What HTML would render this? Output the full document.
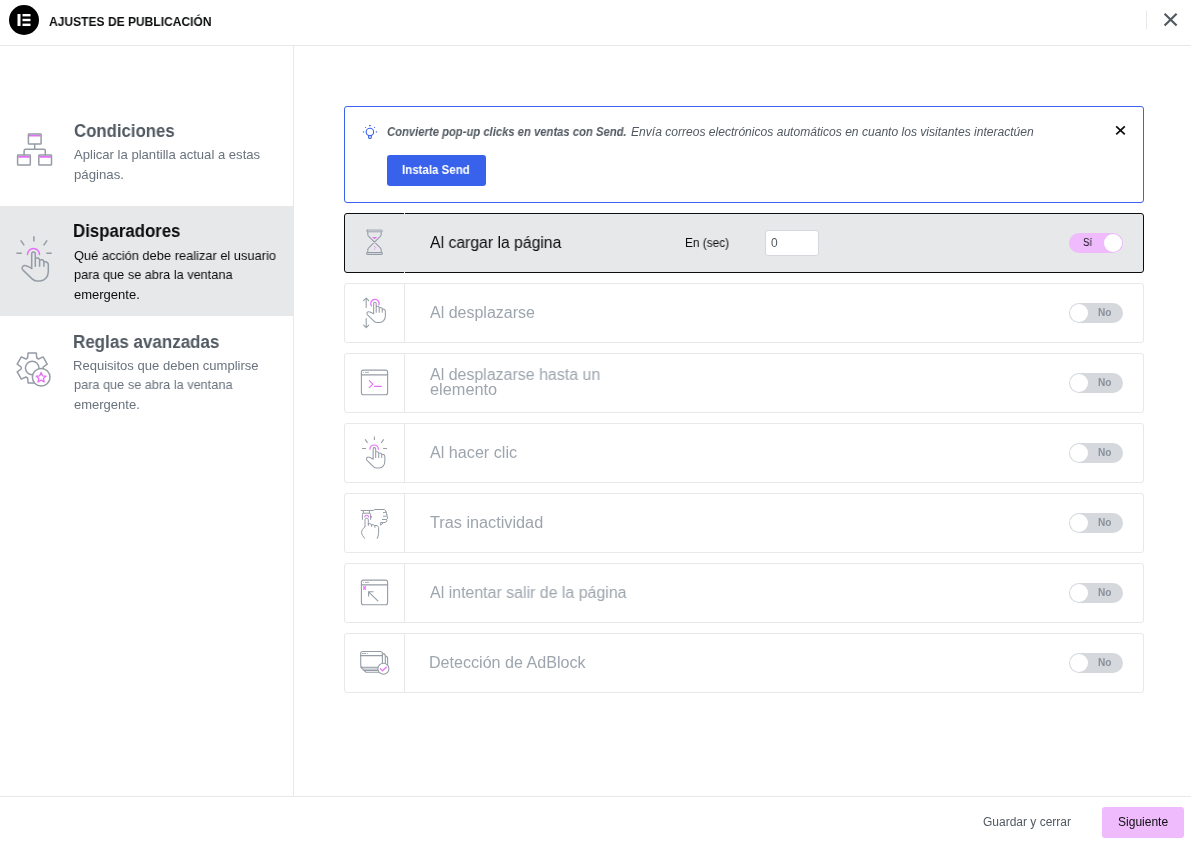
<!DOCTYPE html>
<html lang="es">
<head>
<meta charset="utf-8">
<title>Ajustes de publicación</title>
<style>
*{box-sizing:border-box;margin:0;padding:0}
html,body{width:1191px;height:844px;overflow:hidden;background:#fff}
body{position:relative;font-family:"Liberation Sans",sans-serif;color:#515962}
.abs{position:absolute;white-space:nowrap}
.t{transform-origin:0 0;will-change:transform}
.b{position:absolute}
.row{position:absolute;left:344px;width:800px;height:60px;border:1px solid #e6e8ea;border-radius:3px}
.row i{position:absolute;left:59px;top:0;width:1px;height:58px;background:#e6e8ea}
.row.on{background:#e6e8ea;border-color:#0c0d0e}
.row.on i{top:-1px;height:60px;background:#e6e8ea}
.tog{position:absolute;left:1069px;width:54px;height:20px;border-radius:10px;background:#d5d8dc}
.tog i{position:absolute;left:1px;top:1px;width:18px;height:18px;border-radius:9px;background:#fff}
.tog.on{background:#efbbfc}
.tog.on i{left:35px}
</style>
</head>
<body>
<div class="b" style="left:0;top:45px;width:1191px;height:1px;background:#e6e8ea"></div>
<svg class="abs" style="left:9px;top:5px;width:30px;height:30px" viewBox="0 0 30 30"><circle cx="15" cy="15" r="15" fill="#000"/><rect x="8.5" y="9" width="3" height="12" fill="#fff"/><rect x="13.5" y="9" width="8" height="2.4" fill="#fff"/><rect x="13.5" y="13.8" width="8" height="2.4" fill="#fff"/><rect x="13.5" y="18.6" width="8" height="2.4" fill="#fff"/></svg>
<div class="b" style="left:1146px;top:11px;width:1px;height:18px;background:#e6e8ea"></div>
<svg class="abs" style="left:1160px;top:9px;width:22px;height:22px" viewBox="1160 9 22 22"><path d="M1164.6 13.7L1176.6 25.5M1176.6 13.7L1164.6 25.5" stroke="#515962" stroke-width="2.2" fill="none"/></svg>
<div class="b" style="left:293px;top:46px;width:1px;height:750px;background:#e6e8ea"></div>
<div class="b" style="left:0;top:206px;width:293px;height:110px;background:#e6e8ea"></div>
<div class="b" style="left:344px;top:106px;width:800px;height:97px;border:1px solid #3b63ec;border-radius:3px"></div>
<div class="b" style="left:387px;top:155px;width:99px;height:31px;border-radius:3px;background:#3862eb"></div>
<svg class="abs" style="left:358px;top:120px;width:24px;height:24px" viewBox="358 120 24 24" fill="none" stroke="#3b63ec" stroke-width="1.1" stroke-linecap="round" stroke-linejoin="round"><circle cx="369.9" cy="131.9" r="3.7"/><path d="M368.6 135.4V137.4Q368.6 138.4 369.9 138.4Q371.3 138.4 371.3 137.4V135.4"/><path d="M369.5 125.6h.8M365.5 127.5h.01M374.5 127.5h.01M363.4 131.9h.3M376.3 131.9h.3" stroke-width="1.2"/></svg>
<svg class="abs" style="left:1110px;top:120px;width:22px;height:22px" viewBox="1110 120 22 22"><path d="M1116.2 126.4L1124.8 134.4M1124.8 126.4L1116.2 134.4" stroke="#0c0d0e" stroke-width="1.7" fill="none"/></svg>
<div class="row on" style="top:213px"><i></i></div>
<div class="row" style="top:283px"><i></i></div>
<div class="row" style="top:353px"><i></i></div>
<div class="row" style="top:423px"><i></i></div>
<div class="row" style="top:493px"><i></i></div>
<div class="row" style="top:563px"><i></i></div>
<div class="row" style="top:633px"><i></i></div>
<div class="b" style="left:765px;top:230px;width:54px;height:26px;border:1px solid #d5d8dc;border-radius:3px;background:#fff"></div>
<div class="tog on" style="top:233px"><i></i></div>
<div class="tog" style="top:303px"><i></i></div>
<div class="tog" style="top:373px"><i></i></div>
<div class="tog" style="top:443px"><i></i></div>
<div class="tog" style="top:513px"><i></i></div>
<div class="tog" style="top:583px"><i></i></div>
<div class="tog" style="top:653px"><i></i></div>
<svg class="abs" style="left:8px;top:122px;width:56px;height:56px" viewBox="8 122 56 56" fill="none" stroke="#959ca6" stroke-width="1.5" stroke-linejoin="round" stroke-linecap="round">
 <path d="M29 135.7H40.5M18.2 156.8H29.7M39.4 156.8H50.9" stroke="#e56ff8" stroke-width="1.7" stroke-linecap="butt"/>
 <rect x="28.4" y="134" width="12.7" height="10" rx=".6"/>
 <rect x="17.6" y="155.1" width="12.7" height="10" rx=".6"/>
 <rect x="38.8" y="155.1" width="12.7" height="10" rx=".6"/>
 <path d="M34.7 144.2V149.2M24.1 154.9V150.7Q24.1 149.2 25.6 149.2H43.8Q45.3 149.2 45.3 150.7V154.9"/></svg>
<svg class="abs" style="left:8px;top:228px;width:56px;height:56px" viewBox="8 228 56 56" fill="none" stroke="#959ca6" stroke-width="1.5" stroke-linejoin="round" stroke-linecap="round">
 <path d="M33.9 236.2V241.4M20.7 240.4L24.2 245.4M47.1 240.4L43.6 245.4M16.4 253.2H21.8M46.3 253.2H51.7" stroke-linecap="butt"/>
 <path d="M27.5 254.4A6 6 0 0 1 39.5 254.4" stroke="#e56ff8" stroke-width="1.5"/>
 <path d="M31.7 268.4V253.9a1.8 1.8 0 0 1 3.6 0V266.2M35.3 259C35.5 257.4 39.6 257.3 39.6 260.2V266.2M39.6 260.8C39.8 259.2 43.9 259.1 43.9 262V266.2M43.9 262.8C44.2 261.3 48.3 261.4 48.3 264.6V271.8C48.3 277 44.6 280.9 40 280.9H36.6C34.6 280.9 33.6 280.3 32.1 278.9L23 270.1C21.6 268.6 22 266.6 23.8 265.7C25.5 264.9 27 265.7 31.8 268.5"/></svg>
<svg class="abs" style="left:8px;top:342px;width:56px;height:56px" viewBox="8 342 56 56" fill="none" stroke="#959ca6" stroke-width="1.5" stroke-linejoin="round" stroke-linecap="round">
 <path d="M36.8 358.0L36.3 353.1L28.1 353.1L27.6 358.0L25.9 359.0L21.3 356.9L17.2 364.1L21.2 367.0L21.2 369.0L17.2 371.9L21.3 379.1L25.9 377.0L27.6 378.0L28.1 382.9L36.3 382.9L36.8 378.0L38.5 377.0L43.1 379.1L47.2 371.9L43.2 369.0L43.2 367.0L47.2 364.1L43.1 356.9L38.5 359.0Z"/>
 <circle cx="32.2" cy="368" r="6.8"/>
 <circle cx="41.2" cy="377.2" r="8.8" fill="#fff"/>
 <path d="M41.1 372.4L39.7 375.8L36.1 376.1L38.8 378.4L38.0 382.0L41.1 380.1L44.2 382.0L43.4 378.4L46.1 376.1L42.5 375.8Z" stroke="#e56ff8" stroke-width="1.3"/></svg>
<svg class="abs" style="left:354px;top:222px;width:40px;height:40px" viewBox="354 222 40 40" fill="none" stroke="#959ca6" stroke-width="1.05" stroke-linejoin="round" stroke-linecap="round">
 <rect x="366.6" y="230.1" width="15.8" height="1.7" rx=".85" stroke-width=".9"/>
 <rect x="366.6" y="252.55" width="15.8" height="1.8" rx=".9"/>
 <path d="M367.8 232V234.4Q367.8 235.5 368.7 236.4L380.3 247.8Q381.2 248.7 381.2 249.8V252.4M381.2 232V234.4Q381.2 235.5 380.3 236.4L368.7 247.8Q367.8 248.7 367.8 249.8V252.4"/>
 <path d="M372.1 237H377.1L374.6 239.2Z" fill="#e56ff8" stroke="none"/>
 <path d="M374.4 246.4h.01M375.7 247.7h.01M374.5 249.3h.01" stroke="#e56ff8" stroke-width="1"/></svg>
<svg class="abs" style="left:354px;top:292px;width:40px;height:40px" viewBox="354 292 40 40" fill="none" stroke="#959ca6" stroke-width="1.05" stroke-linejoin="round" stroke-linecap="round">
 <path d="M366.2 307.5V298M363.6 300.7L366.2 298L368.8 300.7M366.2 318.4V327.7M363.6 325.1L366.2 327.7L368.8 325.1"/>
 <path d="M371.4 305.9A4.2 4.2 0 1 1 378.9 305" stroke="#e56ff8" stroke-width="1.2"/>
 <g transform="translate(351.3 124.5) scale(.705)" stroke-width="1.5"><path d="M31.7 268.4V253.9a1.8 1.8 0 0 1 3.6 0V266.2M35.3 259C35.5 257.4 39.6 257.3 39.6 260.2V266.2M39.6 260.8C39.8 259.2 43.9 259.1 43.9 262V266.2M43.9 262.8C44.2 261.3 48.3 261.4 48.3 264.6V271.8C48.3 277 44.6 280.9 40 280.9H36.6C34.6 280.9 33.6 280.3 32.1 278.9L23 270.1C21.6 268.6 22 266.6 23.8 265.7C25.5 264.9 27 265.7 31.8 268.5"/></g></svg>
<svg class="abs" style="left:354px;top:362px;width:40px;height:40px" viewBox="354 362 40 40" fill="none" stroke="#959ca6" stroke-width="1.1" stroke-linejoin="round" stroke-linecap="round">
 <rect x="361.4" y="370.1" width="26.2" height="24.6" rx="2"/>
 <path d="M361.4 374.8H387.6" stroke-width="1.3"/>
 <path d="M363.5 372.4h.01M365.4 372.4H368.6" stroke-width=".8"/>
 <path d="M369.3 380.6L372.9 384.1L369.3 387.7M374.5 386.4H381.4" stroke="#e56ff8" stroke-width="1.1"/></svg>
<svg class="abs" style="left:354px;top:432px;width:40px;height:40px" viewBox="354 432 40 40" fill="none" stroke="#959ca6" stroke-width="1.05" stroke-linejoin="round" stroke-linecap="round">
 <g transform="translate(350.5 269.9) scale(.705)" stroke-width="1.5"><path d="M33.9 236.2V241.4M20.7 240.4L24.2 245.4M47.1 240.4L43.6 245.4M16.4 253.2H21.8M46.3 253.2H51.7" stroke-linecap="butt"/><path d="M27.5 254.4A6 6 0 0 1 39.5 254.4" stroke="#e56ff8" stroke-width="1.7"/></g><g transform="translate(350.8 269.9) scale(.705)" stroke-width="1.5"><path d="M31.7 268.4V253.9a1.8 1.8 0 0 1 3.6 0V266.2M35.3 259C35.5 257.4 39.6 257.3 39.6 260.2V266.2M39.6 260.8C39.8 259.2 43.9 259.1 43.9 262V266.2M43.9 262.8C44.2 261.3 48.3 261.4 48.3 264.6V271.8C48.3 277 44.6 280.9 40 280.9H36.6C34.6 280.9 33.6 280.3 32.1 278.9L23 270.1C21.6 268.6 22 266.6 23.8 265.7C25.5 264.9 27 265.7 31.8 268.5"/></g></svg>
<svg class="abs" style="left:354px;top:502px;width:40px;height:40px" viewBox="354 502 40 40" fill="none" stroke="#959ca6" stroke-width="1.0" stroke-linejoin="round" stroke-linecap="round">
 <path d="M361.2 510.5H373.2L374.6 509.5H384.4Q385.6 509.6 385.8 511.2"/>
 <path d="M383.4 512.6H385.6Q386.9 512.8 386.8 514.4M383.4 516.2H386.6Q387.9 516.6 387.6 518M382.4 519.5H386.4Q387.4 520 386.8 521Q386.2 522.6 384 522.6H380.6V525.2L383 523"/>
 <path d="M385.8 511.2Q386.6 511.6 386.4 512.8M386.8 514.4Q387.6 515 387.2 516.3M387.6 518Q387.6 519 386.6 519.5"/>
 <path d="M363.3 510.6V513.2M369.4 510.6V513.2M362.4 519.4V514.2Q362.4 513.2 363.4 513.2H369.6Q370.6 513.2 370.6 514.2V519.4M370.8 516.2L371.9 516.9L370.8 517.6"/>
 <path d="M364.9 517A1.8 1.8 0 0 1 368.5 517" stroke="#e56ff8" stroke-width="1.1"/>
 <path d="M365 526.6V519.8A1.65 1.65 0 0 1 368.3 519.8V525.5M365 526.6Q361.4 529.6 361.4 532.4Q361.6 535 364.6 538.4"/>
 <path d="M368.3 523.6Q371.4 523.2 371.5 525V526.4M371.5 524.6Q374.8 524.4 374.9 526V527.4M374.9 525.4Q378.4 525 378.6 527.4V533.2Q378.4 536 377.3 538.4"/></svg>
<svg class="abs" style="left:354px;top:572px;width:40px;height:40px" viewBox="354 572 40 40" fill="none" stroke="#959ca6" stroke-width="1.1" stroke-linejoin="round" stroke-linecap="round">
 <rect x="361.4" y="580.1" width="26.2" height="24.6" rx="2"/>
 <path d="M361.4 584.8H387.6" stroke-width="1.3"/>
 <path d="M363.5 582.4h.01M365.4 582.4H368.6" stroke-width=".8"/>
 <path d="M363.4 586.3L365.8 589.7M365.8 586.3L363.4 589.7" stroke="#e56ff8" stroke-width="1.3" stroke-linecap="butt"/>
 <path d="M378.3 601.3L368.6 591.8M368.6 596.6V591.8H373.6" stroke-linecap="butt" stroke-linejoin="miter"/></svg>
<svg class="abs" style="left:354px;top:642px;width:40px;height:40px" viewBox="354 642 40 40" fill="none" stroke="#959ca6" stroke-width="1.1" stroke-linejoin="round" stroke-linecap="round">
 <path d="M360.8 667.3L364 670.4H384V667.3Z" fill="#d5d8dc" stroke="none"/>
 <path d="M383 653.6Q385.3 653.8 385.3 656V668M385.4 656Q387.6 656.2 387.6 658.4V668M360.9 667.4L366 672.3H384M363.8 670.4H384"/>
 <rect x="360.7" y="651.5" width="21.7" height="15.8" rx="2" fill="#fff"/>
 <path d="M360.7 655.7H382.4" stroke-width="1.2"/>
 <path d="M362.4 653.5H365.8M367.7 653.5h.01" stroke-width=".8"/>
 <circle cx="383.4" cy="668.8" r="5.5" fill="#fff"/>
 <path d="M380.4 668.6L382.4 670.8L386.4 667.2" stroke="#e56ff8" stroke-width="1.2"/></svg>
<div class="b" style="left:0;top:796px;width:1191px;height:1px;background:#e6e8ea"></div>
<div class="b" style="left:1102px;top:807px;width:82px;height:31px;border-radius:3px;background:#efbbfc"></div>
<div class="abs t" id="h1" style="left:49px;top:14px;font-size:12.5px;line-height:17px;color:#0c0d0e;transform:scaleX(0.9630);font-weight:700">AJUSTES DE PUBLICACIÓN</div>
<div class="abs t" id="s1" style="left:74px;top:120px;font-size:17.5px;line-height:23px;color:#515962;transform:scaleX(0.9589);font-weight:700">Condiciones</div>
<div class="abs t" id="s1a" style="left:74px;top:146px;font-size:13px;line-height:17px;color:#69727d;transform:scaleX(1.0060)">Aplicar la plantilla actual a estas</div>
<div class="abs t" id="s1b" style="left:74px;top:166px;font-size:13px;line-height:17px;color:#69727d;transform:scaleX(1.0169)">páginas.</div>
<div class="abs t" id="s2" style="left:73px;top:220px;font-size:17.5px;line-height:23px;color:#0c0d0e;transform:scaleX(0.9605);font-weight:700">Disparadores</div>
<div class="abs t" id="s2a" style="left:74px;top:247px;font-size:13px;line-height:17px;color:#0c0d0e;transform:scaleX(0.9877)">Qué acción debe realizar el usuario</div>
<div class="abs t" id="s2b" style="left:74px;top:266px;font-size:13px;line-height:17px;color:#0c0d0e;transform:scaleX(0.9789)">para que se abra la ventana</div>
<div class="abs t" id="s2c" style="left:74px;top:286px;font-size:13px;line-height:17px;color:#0c0d0e;transform:scaleX(0.9953)">emergente.</div>
<div class="abs t" id="s3" style="left:73px;top:331px;font-size:17.5px;line-height:23px;color:#515962;transform:scaleX(0.9709);font-weight:700">Reglas avanzadas</div>
<div class="abs t" id="s3a" style="left:73px;top:357px;font-size:13px;line-height:17px;color:#69727d;transform:scaleX(1.0030)">Requisitos que deben cumplirse</div>
<div class="abs t" id="s3b" style="left:74px;top:376px;font-size:13px;line-height:17px;color:#69727d;transform:scaleX(0.9789)">para que se abra la ventana</div>
<div class="abs t" id="s3c" style="left:74px;top:396px;font-size:13px;line-height:17px;color:#69727d;transform:scaleX(0.9953)">emergente.</div>
<div class="abs t" id="n1" style="left:387px;top:124px;font-size:12px;line-height:16px;color:#515962;transform:scaleX(0.9382);font-weight:700;font-style:italic">Convierte pop-up clicks en ventas con Send.</div>
<div class="abs t" id="n2" style="left:631px;top:124px;font-size:12px;line-height:16px;color:#515962;transform:scaleX(1.0064);font-style:italic">Envía correos electrónicos automáticos en cuanto los visitantes interactúen</div>
<div class="abs t" id="nb" style="left:402px;top:162px;font-size:12px;line-height:16px;color:#fff;transform:scaleX(0.9588);font-weight:700">Instala Send</div>
<div class="abs t" id="r1" style="left:430px;top:232px;font-size:16px;line-height:21px;color:#0c0d0e;transform:scaleX(0.9850)">Al cargar la página</div>
<div class="abs t" id="r2" style="left:430px;top:302px;font-size:16px;line-height:21px;color:#9da5ae;transform:scaleX(0.9986)">Al desplazarse</div>
<div class="abs t" id="r3a" style="left:430px;top:364px;font-size:16px;line-height:21px;color:#9da5ae;transform:scaleX(0.9965)">Al desplazarse hasta un</div>
<div class="abs t" id="r3b" style="left:430px;top:379px;font-size:16px;line-height:21px;color:#9da5ae;transform:scaleX(1.0201)">elemento</div>
<div class="abs t" id="r4" style="left:430px;top:442px;font-size:16px;line-height:21px;color:#9da5ae;transform:scaleX(1.0093)">Al hacer clic</div>
<div class="abs t" id="r5" style="left:430px;top:512px;font-size:16px;line-height:21px;color:#9da5ae;transform:scaleX(1.0154)">Tras inactividad</div>
<div class="abs t" id="r6" style="left:430px;top:582px;font-size:16px;line-height:21px;color:#9da5ae;transform:scaleX(0.9954)">Al intentar salir de la página</div>
<div class="abs t" id="r7" style="left:429px;top:652px;font-size:16px;line-height:21px;color:#9da5ae;transform:scaleX(1.0055)">Detección de AdBlock</div>
<div class="abs t" id="en" style="left:685px;top:235px;font-size:12px;line-height:16px;color:#0c0d0e;transform:scaleX(0.9850)">En (sec)</div>
<div class="abs t" id="z0" style="left:771px;top:235px;font-size:12px;line-height:16px;color:#515962;transform:scaleX(0.9500)">0</div>
<div class="abs t" id="si" style="left:1083px;top:236px;font-size:10px;line-height:13px;color:#0c0d0e;transform:scaleX(0.9391)">Sí</div>
<div class="abs t" id="f1" style="left:983px;top:814px;font-size:12px;line-height:16px;color:#515962;transform:scaleX(0.9983)">Guardar y cerrar</div>
<div class="abs t" id="f2" style="left:1118px;top:814px;font-size:12px;line-height:16px;color:#0c0d0e;transform:scaleX(1.0020)">Siguiente</div>
<div class="abs t" id="no0" style="left:1098px;top:306px;font-size:10px;line-height:13px;color:#8a929d;transform:scaleX(1.0122);font-weight:700">No</div>
<div class="abs t" id="no1" style="left:1098px;top:376px;font-size:10px;line-height:13px;color:#8a929d;transform:scaleX(1.0122);font-weight:700">No</div>
<div class="abs t" id="no2" style="left:1098px;top:446px;font-size:10px;line-height:13px;color:#8a929d;transform:scaleX(1.0122);font-weight:700">No</div>
<div class="abs t" id="no3" style="left:1098px;top:516px;font-size:10px;line-height:13px;color:#8a929d;transform:scaleX(1.0122);font-weight:700">No</div>
<div class="abs t" id="no4" style="left:1098px;top:586px;font-size:10px;line-height:13px;color:#8a929d;transform:scaleX(1.0122);font-weight:700">No</div>
<div class="abs t" id="no5" style="left:1098px;top:656px;font-size:10px;line-height:13px;color:#8a929d;transform:scaleX(1.0122);font-weight:700">No</div>
</body>
</html>
